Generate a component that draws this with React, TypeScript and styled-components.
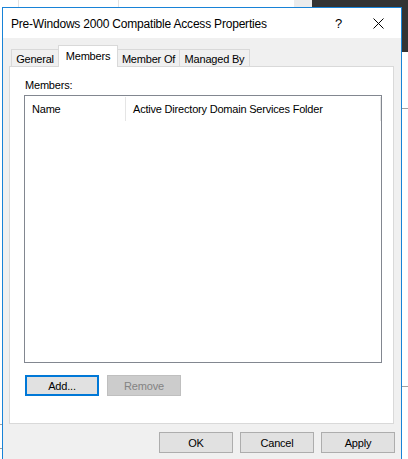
import * as React from 'react';
import styled, { createGlobalStyle } from 'styled-components';

const GlobalStyle = createGlobalStyle`
  html, body {
    margin: 0;
    padding: 0;
    background: #ffffff;
  }
  body {
    font-family: 'Liberation Sans', Arial, sans-serif;
    font-size: 11px;
    letter-spacing: -0.2px;
    color: #000;
  }
`;

const Desktop = styled.div`
  position: relative;
  width: 408px;
  height: 459px;
  overflow: hidden;
  background: #ffffff;
`;

// windows sitting behind the dialog
const BackWindow = styled.div<{ $x: number; $y: number; $w: number; $h: number; $bg: string }>`
  position: absolute;
  left: ${(p) => p.$x}px;
  top: ${(p) => p.$y}px;
  width: ${(p) => p.$w}px;
  height: ${(p) => p.$h}px;
  background: ${(p) => p.$bg};
`;

const Dialog = styled.div`
  position: absolute;
  left: 2px;
  top: 7px;
  width: 398px;
  height: 470px;
  border: 1px solid #1883d7;
  background: #f0f0f0;
  display: flex;
  flex-direction: column;
`;

const TitleBar = styled.div`
  height: 30px;
  background: #ffffff;
  display: flex;
  align-items: center;
  padding-left: 8px;
`;

const Title = styled.div`
  flex: 1;
  font-size: 12px;
  padding-top: 1px;
`;

const CaptionButton = styled.div`
  width: 45px;
  height: 30px;
  display: flex;
  align-items: center;
  justify-content: center;
`;

const HelpGlyph = styled.span`
  font-size: 13px;
  margin-left: 10px;
`;

const Body = styled.div`
  flex: 1;
  padding: 7px 7px 0 6px;
  display: flex;
  flex-direction: column;
`;

const TabStrip = styled.div`
  display: flex;
  align-items: flex-end;
  height: 22px;
  margin-left: 2px;
  margin-bottom: -1px;
  position: relative;
  z-index: 1;
`;

const Tab = styled.div<{ $w: number; $active?: boolean }>`
  box-sizing: border-box;
  width: ${(p) => p.$w}px;
  height: ${(p) => (p.$active ? 22 : 18)}px;
  margin-left: -1px;
  border: 1px solid #d9d9d9;
  border-bottom: ${(p) => (p.$active ? 'none' : '1px solid #d9d9d9')};
  background: ${(p) => (p.$active ? '#ffffff' : '#f0f0f0')};
  display: flex;
  align-items: ${(p) => (p.$active ? 'flex-start' : 'center')};
  justify-content: center;
  padding-top: ${(p) => (p.$active ? '4px' : '1px')};
  position: relative;
  z-index: ${(p) => (p.$active ? 2 : 0)};
  &:first-child {
    margin-left: 0;
  }
`;

const Panel = styled.div`
  box-sizing: border-box;
  height: 358px;
  border: 1px solid #d9d9d9;
  background: #ffffff;
  padding: 12px 11px 0 14px;
  display: flex;
  flex-direction: column;
`;

const FieldLabel = styled.div`
  height: 16px;
  line-height: 13px;
  margin-left: 1px;
`;

const ListView = styled.div`
  box-sizing: border-box;
  height: 268px;
  border: 1px solid #828790;
  background: #ffffff;
`;

const HeaderRow = styled.div`
  display: flex;
  height: 24px;
  padding-top: 1px;
`;

const HeaderCell = styled.div<{ $w?: number }>`
  box-sizing: border-box;
  ${(p) => (p.$w ? `width: ${p.$w}px;` : 'flex: 1;')}
  padding-left: 7px;
  display: flex;
  align-items: center;
  border-right: 1px solid #e5e5e5;
`;

const ButtonRow = styled.div<{ $gap: number; $justify?: string }>`
  display: flex;
  gap: ${(p) => p.$gap}px;
  justify-content: ${(p) => p.$justify || 'flex-start'};
`;

const Button = styled.div<{ $focused?: boolean; $disabled?: boolean }>`
  box-sizing: border-box;
  width: 74px;
  height: 21px;
  display: flex;
  align-items: center;
  justify-content: center;
  background: ${(p) => (p.$disabled ? '#cccccc' : '#e1e1e1')};
  color: ${(p) => (p.$disabled ? '#838383' : '#000')};
  border: ${(p) =>
    p.$focused ? '2px solid #0078d7' : p.$disabled ? '1px solid #bfbfbf' : '1px solid #adadad'};
`;

const PanelButtons = styled(ButtonRow)`
  margin-top: 12px;
  margin-left: 1px;
`;

const DialogButtons = styled(ButtonRow)`
  margin-top: 8px;
  margin-right: -1px;
`;

const CloseIcon = () => (
  <svg width="11" height="11" viewBox="0 0 11 11">
    <path d="M0.5 0.5 L10.5 10.5 M10.5 0.5 L0.5 10.5" stroke="#000" strokeWidth="1" fill="none" />
  </svg>
);

export default function App() {
  return (
    <>
      <GlobalStyle />
      <Desktop>
        <BackWindow $x={18} $y={0} $w={1} $h={7} $bg="#e3e3e3" />
        <BackWindow $x={118} $y={0} $w={1} $h={7} $bg="#e3e3e3" />
        <BackWindow $x={294} $y={0} $w={18} $h={7} $bg="#ececec" />
        <BackWindow $x={312} $y={0} $w={96} $h={52} $bg="#333333" />
        <BackWindow $x={402} $y={108} $w={6} $h={1} $bg="#a0a0a0" />
        <BackWindow $x={402} $y={386} $w={6} $h={1} $bg="#a0a0a0" />
        <BackWindow $x={0} $y={424} $w={2} $h={1} $bg="#a0a0a0" />
        <BackWindow $x={0} $y={448} $w={2} $h={1} $bg="#a0a0a0" />

        <Dialog>
          <TitleBar>
            <Title>Pre-Windows 2000 Compatible Access Properties</Title>
            <CaptionButton>
              <HelpGlyph>?</HelpGlyph>
            </CaptionButton>
            <CaptionButton>
              <CloseIcon />
            </CaptionButton>
          </TitleBar>
          <Body>
            <TabStrip>
              <Tab $w={48}>General</Tab>
              <Tab $w={60} $active>
                Members
              </Tab>
              <Tab $w={63}>Member Of</Tab>
              <Tab $w={71}>Managed By</Tab>
            </TabStrip>
            <Panel>
              <FieldLabel>Members:</FieldLabel>
              <ListView>
                <HeaderRow>
                  <HeaderCell $w={101}>Name</HeaderCell>
                  <HeaderCell>Active Directory Domain Services Folder</HeaderCell>
                </HeaderRow>
              </ListView>
              <PanelButtons $gap={8}>
                <Button $focused>Add...</Button>
                <Button $disabled>Remove</Button>
              </PanelButtons>
            </Panel>
            <DialogButtons $gap={7} $justify="flex-end">
              <Button>OK</Button>
              <Button>Cancel</Button>
              <Button>Apply</Button>
            </DialogButtons>
          </Body>
        </Dialog>
      </Desktop>
    </>
  );
}
